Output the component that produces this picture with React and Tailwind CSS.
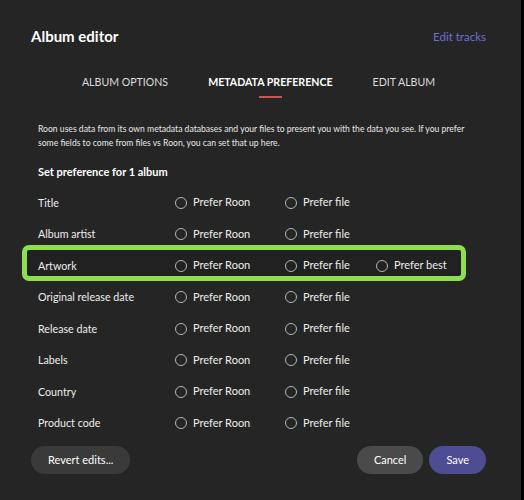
import { useState } from 'react'

const fields = [
  { name: 'Title' },
  { name: 'Album artist' },
  { name: 'Artwork', best: true },
  { name: 'Original release date' },
  { name: 'Release date' },
  { name: 'Labels' },
  { name: 'Country' },
  { name: 'Product code' },
]

function Radio({ label, checked, onClick, className }) {
  return (
    <button onClick={onClick} className={'flex items-center gap-[6px] text-[11px] text-[#ededed] ' + className}>
      <span className="w-[12px] h-[12px] rounded-full border-[1.5px] border-[#b5b5b5] flex items-center justify-center">
        {checked && <span className="w-[6px] h-[6px] rounded-full bg-[#d8d8d8]" />}
      </span>
      {label}
    </button>
  )
}

function App() {
  const [prefs, setPrefs] = useState({})

  return (
    <div className="min-h-screen bg-black" style={{ fontFamily: 'Lato, "Noto Sans", sans-serif' }}>
      <div className="w-[521px] h-[500px] bg-[#252525] text-white">
        <header className="flex items-center justify-between pl-[31px] pr-[35px] pt-[25px]">
          <h1 className="text-[15px] font-bold">Album editor</h1>
          <button className="text-[11.5px] text-[#6d6fd6]">Edit tracks</button>
        </header>

        <nav className="flex justify-center gap-[40px] pt-[27px] pr-[4px] text-[10.6px]">
          <span className="text-[#dcdcdc]">ALBUM OPTIONS</span>
          <span className="flex flex-col items-center font-bold">
            METADATA PREFERENCE
            <span className="mt-[6px] w-[23px] h-[2px] bg-[#c9584c]" />
          </span>
          <span className="text-[#dcdcdc]">EDIT ALBUM</span>
        </nav>

        <main className="px-[38px] pt-[24px]">
          <p className="whitespace-nowrap text-[8.6px] leading-[14px] text-[#e8e8e8]">
            Roon uses data from its own metadata databases and your files to present you with the data you see. If you prefer
            <br />
            some fields to come from files vs Roon, you can set that up here.
          </p>
          <h2 className="mt-[14px] text-[11px] font-bold">Set preference for 1 album</h2>

          <div className="mt-[6px] flex flex-col">
            {fields.map((f) => (
              <div key={f.name} className="relative flex items-center h-[31.5px] text-[10.7px]">
                {f.best && (
                  <div className="absolute left-[-16px] right-[17px] top-[-5px] bottom-0 rounded-[7px] border-[5px] border-[#8edf4f] bg-[#212121]" />
                )}
                <span className="relative w-[137px] text-[#ededed]">{f.name}</span>
                <Radio
                  className="relative w-[110px]"
                  label="Prefer Roon"
                  checked={prefs[f.name] === 'roon'}
                  onClick={() => setPrefs({ ...prefs, [f.name]: 'roon' })}
                />
                <Radio
                  className="relative w-[91px]"
                  label="Prefer file"
                  checked={prefs[f.name] === 'file'}
                  onClick={() => setPrefs({ ...prefs, [f.name]: 'file' })}
                />
                {f.best && (
                  <Radio
                    className="relative"
                    label="Prefer best"
                    checked={prefs[f.name] === 'best'}
                    onClick={() => setPrefs({ ...prefs, [f.name]: 'best' })}
                  />
                )}
              </div>
            ))}
          </div>
        </main>

        <footer className="flex items-center justify-between pl-[31px] pr-[35px] mt-[7px] text-[11px]">
          <button className="h-[28px] px-[17px] rounded-full bg-[#3a3a3a]">Revert edits...</button>
          <div className="flex gap-[6px]">
            <button className="h-[28px] px-[17px] rounded-full bg-[#4a4a4a]">Cancel</button>
            <button className="h-[28px] px-[17px] rounded-full bg-[#4e4c93]">Save</button>
          </div>
        </footer>
      </div>
    </div>
  )
}

export default App
